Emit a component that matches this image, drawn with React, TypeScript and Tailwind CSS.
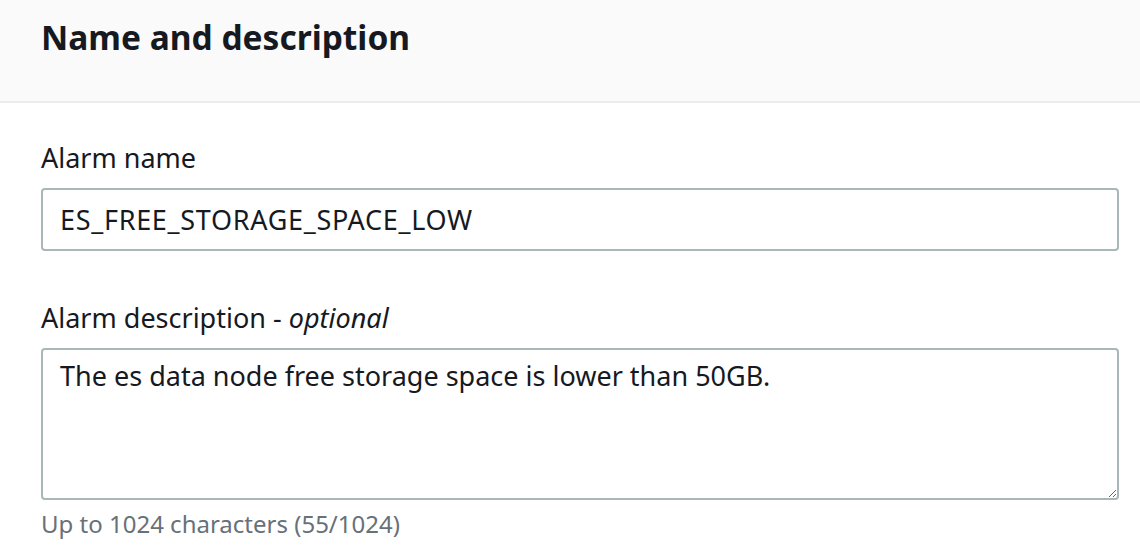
export default function App() {
  return (
    <div className="w-[1140px] h-[550px] bg-white overflow-hidden text-[#16191f]" style={{ fontFamily: '"Noto Sans", "Open Sans", sans-serif' }}>
      {/* header */}
      <div className="h-[103px] bg-[#fafafa] border-b-2 border-b-[#eaeded] pl-[41px] pt-[13px]">
        <h2 className="text-[33.5px] font-bold leading-[48px]">Name and description</h2>
      </div>
      {/* body */}
      <div className="pl-[41px] pr-[21px] pt-[37px]">
        <label className="block text-[27px] leading-[36px] mb-[12px]">Alarm name</label>
        <input
          readOnly
          value="ES_FREE_STORAGE_SPACE_LOW"
          className="block w-full h-[63px] border-2 border-[#aab7b8] rounded-[4px] px-[17px] text-[27px] tracking-[0.7px] text-[#16191f] outline-none"
        />
        <label className="block text-[27px] leading-[36px] mt-[49px] mb-[12px]">
          Alarm description - <i>optional</i>
        </label>
        <textarea
          readOnly
          value="The es data node free storage space is lower than 50GB."
          className="block w-full h-[152px] border-2 border-[#aab7b8] rounded-[4px] px-[17px] py-[8px] text-[27px] leading-[36px] text-[#16191f] outline-none"
        />
        <div className="text-[24px] leading-[32px] text-[#687078] mt-[8px]">Up to 1024 characters (55/1024)</div>
      </div>
    </div>
  )
}
